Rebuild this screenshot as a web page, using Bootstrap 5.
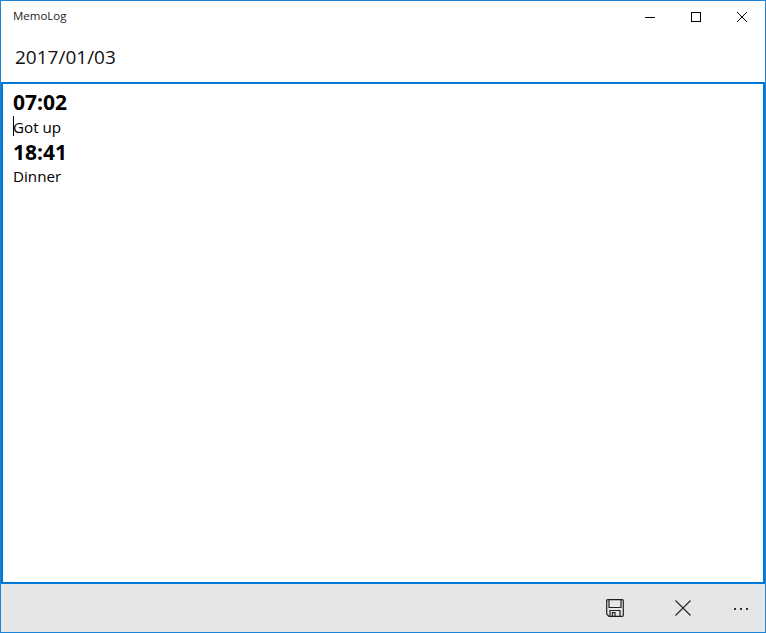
<!DOCTYPE html>
<html lang="en">
<head>
<meta charset="utf-8">
<title>MemoLog</title>
<link href="https://cdn.jsdelivr.net/npm/bootstrap@5.3.0/dist/css/bootstrap.min.css" rel="stylesheet">
<style>
html,body{height:100%;margin:0;overflow:hidden;background:#fff}
body{font-family:"Open Sans","Noto Sans","Liberation Sans",sans-serif;color:#000}
.app-window{height:633px;border:1px solid #1b84d8}
.title-row{height:29px;padding-left:12px}
.app-name{font-size:11.5px;color:#222;line-height:1}
.win-btn{width:46px;height:29px;background:none;border:0;padding:0}
.date-row{height:52px;padding-left:14px;padding-top:2px;font-size:19px;color:#111}
.memo-area{border:2px solid #0078d7;padding:6px 10px;min-height:0}
.memo-time{font-size:21px;font-weight:700;line-height:25px}
.memo-text{font-size:15.2px;line-height:24px;height:25px;position:relative}
.memo-tight{margin-top:-1px}
.caret-mark{position:absolute;left:0;top:1px;width:1px;height:20px;background:#000}
.cmd-row{height:48px;background:#e6e6e6}
.cmd-btn{width:68px;height:48px;background:none;border:0;padding:0;display:flex;align-items:center;justify-content:center}
.cmd-last{width:48px}
</style>
</head>
<body>
<div class="app-window d-flex flex-column">
  <div class="title-row d-flex align-items-center justify-content-between flex-shrink-0">
    <span class="app-name">MemoLog</span>
    <div class="d-flex">
      <button class="win-btn" aria-label="Minimize"><svg width="10" height="10" viewBox="0 0 10 10"><path d="M0 5.5H10" stroke="#000" fill="none"/></svg></button>
      <button class="win-btn" aria-label="Maximize"><svg width="10" height="10" viewBox="0 0 10 10"><rect x=".5" y=".5" width="9" height="9" stroke="#000" fill="none"/></svg></button>
      <button class="win-btn" aria-label="Close"><svg width="10" height="10" viewBox="0 0 10 10"><path d="M0 0L10 10M10 0L0 10" stroke="#000" fill="none"/></svg></button>
    </div>
  </div>
  <div class="date-row d-flex align-items-center flex-shrink-0">2017/01/03</div>
  <div class="memo-area flex-grow-1">
    <div class="memo-time">07:02</div>
    <div class="memo-text"><span class="caret-mark"></span>Got up</div>
    <div class="memo-time">18:41</div>
    <div class="memo-text memo-tight">Dinner</div>
  </div>
  <div class="cmd-row d-flex justify-content-end flex-shrink-0">
    <button class="cmd-btn" aria-label="Save"><svg width="18" height="18" viewBox="0 0 18 18" fill="none" stroke="#222" stroke-width="1.2"><path d="M.7 1.7a1 1 0 0 1 1-1H16.3a1 1 0 0 1 1 1V16.3a1 1 0 0 1-1 1H3L.7 15Z"/><path d="M3 .7V8.5H15V.7"/><path d="M4 17.3V11.5H14V17.3"/><path d="M6.5 17.3V13.5H9V17.3"/></svg></button>
    <button class="cmd-btn" aria-label="Cancel"><svg width="16" height="16" viewBox="0 0 16 16"><path d="M.5 .5L15.5 15.5M15.5 .5L.5 15.5" stroke="#222" stroke-width="1.1" fill="none"/></svg></button>
    <button class="cmd-btn cmd-last" aria-label="More"><svg width="16" height="6" viewBox="0 0 16 6" fill="#333"><rect x="1" y="3" width="2" height="2"/><rect x="7" y="3" width="2" height="2"/><rect x="13" y="3" width="2" height="2"/></svg></button>
  </div>
</div>
</body>
</html>
